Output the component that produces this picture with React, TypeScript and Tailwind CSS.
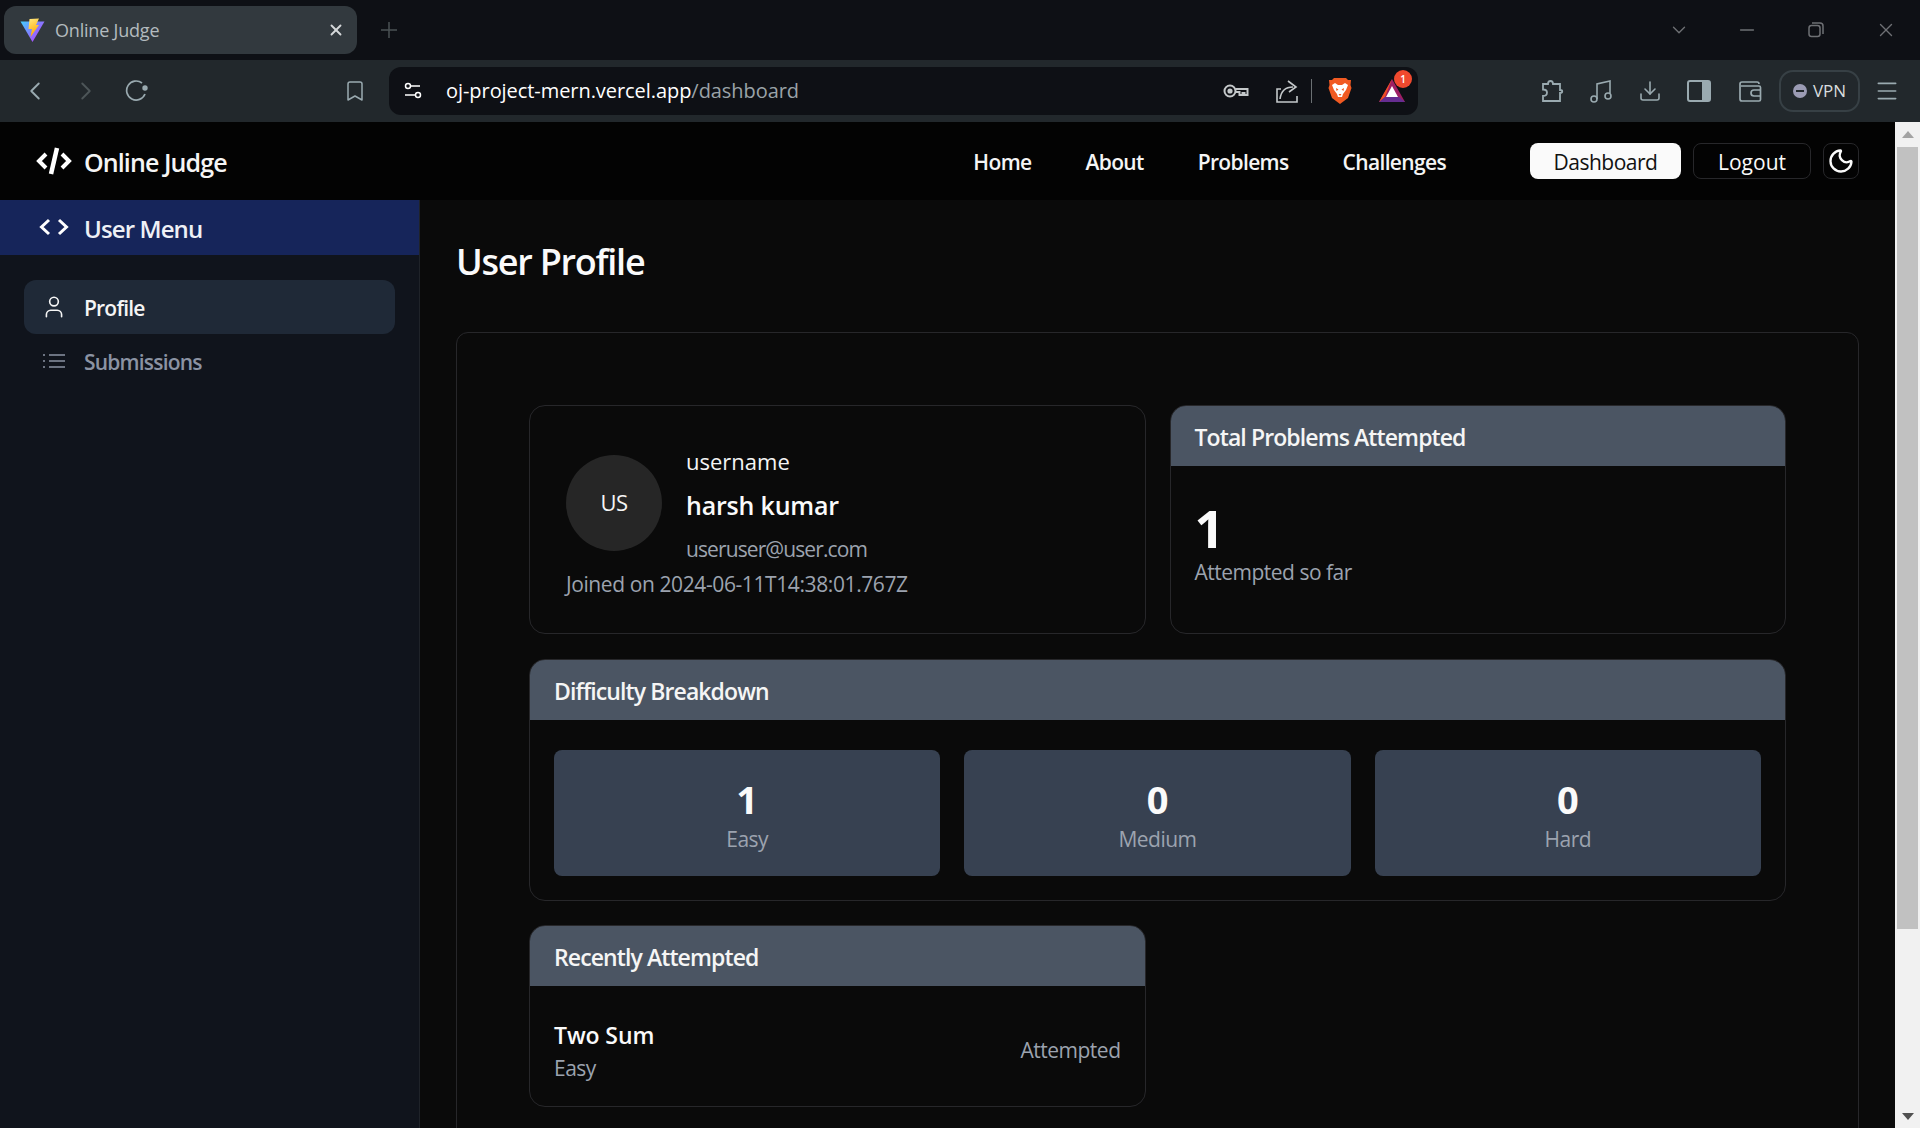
import { ChevronDown, ChevronLeft, ChevronRight, Bookmark, Download, Menu, Minus, Moon, User, X } from "lucide-react";

function ViteLogo() {
  return (
    <svg width="25" height="25" viewBox="0 0 25 25">
      <defs>
        <linearGradient id="viteA" x1="0" y1="0" x2="1" y2="0.8">
          <stop offset="0" stopColor="#41d1ff" />
          <stop offset="1" stopColor="#bd34fe" />
        </linearGradient>
        <linearGradient id="viteB" x1="0" y1="0" x2="0.3" y2="1">
          <stop offset="0" stopColor="#ffea83" />
          <stop offset="1" stopColor="#ffa800" />
        </linearGradient>
      </defs>
      <path d="M0.5 3.5 L24.5 3.5 L12.5 24 Z" fill="url(#viteA)" />
      <path d="M9.5 1 L19 0.5 L16 7 L19 7 L10.5 19 L12 11 L8.5 11 Z" fill="url(#viteB)" />
    </svg>
  );
}

function BraveLion() {
  return (
    <svg width="24" height="28" viewBox="0 0 24 28">
      <path d="M6 1 L18 1 L20 3 L23 3 L22.5 8 L23.5 11 L20 21 L12 27 L4 21 L0.5 11 L1.5 8 L1 3 L4 3 Z" fill="#f15a22" />
      <path d="M7 6 L10 8 L14 8 L17 6 L20 8 L18 13 L15 17 L14 20 L10 20 L9 17 L6 13 L4 8 Z" fill="#fff" />
      <path d="M8 11 L10.5 12.5 L8.5 14 Z M16 11 L13.5 12.5 L15.5 14 Z M10.5 17 L13.5 17 L12 19 Z" fill="#f15a22" />
    </svg>
  );
}

function BatLogo() {
  return (
    <svg width="28" height="24" viewBox="0 0 28 24">
      <path d="M14 0 L27 23 L1 23 Z" fill="#9e1f63" />
      <path d="M14 0 L1 23 L7 18 Z" fill="#f04e23" />
      <path d="M1 23 L27 23 L21 18 L7 18 Z" fill="#662d91" />
      <path d="M14 7 L20 18 L8 18 Z" fill="#fff" />
    </svg>
  );
}

function Toolbar() {
  return (
    <div className="h-[122px] shrink-0 bg-[#0e1015]">
      <div className="h-[60px] flex items-center pl-1">
        <div className="w-[353px] h-[48px] rounded-[12px] bg-[#32393e] flex items-center pl-[16px] pr-[12px]">
          <ViteLogo />
          <span className="ml-[10px] text-[18px] tracking-[-0.2px] text-[#b4bbbf] flex-1">Online Judge</span>
          <X size={18} strokeWidth={2.5} className="text-[#d5d8da]" />
        </div>
        <svg width="18" height="18" viewBox="0 0 18 18" className="ml-[23px] text-[#4b5154]">
          <path d="M9 1v16M1 9h16" stroke="currentColor" strokeWidth="1.5" />
        </svg>
        <div className="ml-auto flex items-center text-[#6e7074]">
          <ChevronDown size={22} strokeWidth={1.5} />
          <Minus size={22} strokeWidth={1.5} className="ml-[46px]" />
          <svg width="16" height="16" viewBox="0 0 16 16" fill="none" stroke="currentColor" strokeWidth="1.5" className="ml-[50px]">
            <rect x="1" y="3.5" width="11" height="11" rx="2.5" />
            <path d="M4 1h8a3 3 0 0 1 3 3v8" />
          </svg>
          <X size={22} strokeWidth={1.5} className="ml-[51px] mr-[23px]" />
        </div>
      </div>
      <div className="h-[62px] bg-[#22282c] flex items-center text-[#9aaab0]">
        <ChevronLeft size={30} strokeWidth={1.5} className="ml-[20px]" />
        <ChevronRight size={30} strokeWidth={1.5} className="ml-[21px] text-[#4d5558]" />
        <svg width="24" height="24" viewBox="0 0 24 24" fill="none" stroke="currentColor" strokeWidth="1.7" className="ml-[24px]">
          <path d="M20 15 A 9.5 9.5 0 1 1 17 4" />
          <circle cx="20" cy="9" r="2.7" fill="currentColor" stroke="none" />
        </svg>
        <Bookmark size={24} strokeWidth={1.5} className="ml-[194px]" />
        <div className="ml-[22px] w-[1029px] h-[48px] rounded-[12px] bg-[#0e1015] flex items-center pl-[14px] pr-[10px]">
          <svg width="20" height="20" viewBox="0 0 20 20" fill="none" stroke="#ffffff" strokeWidth="1.5">
            <circle cx="5" cy="5" r="2.5" />
            <path d="M8 5h9M2 14h10" />
            <circle cx="15" cy="14" r="2.5" />
          </svg>
          <span className="ml-[23px] text-[20px] text-white tracking-[-0.06px] flex-1">
            oj-project-mern.vercel.app<span className="text-[#9aa3a8]">/dashboard</span>
          </span>
          <svg width="26" height="16" viewBox="0 0 26 16" fill="none" stroke="#c4c8ca" strokeWidth="2" className="mr-[26px]">
            <circle cx="7" cy="8" r="5.5" />
            <circle cx="7" cy="8" r="1.6" fill="#c4c8ca" />
            <path d="M12.5 6h12v6h-3v-2h-2v2h-3v-3h-4" />
          </svg>
          <svg width="24" height="24" viewBox="0 0 24 24" fill="none" stroke="#c4c8ca" strokeWidth="1.6">
            <path d="M6 10 L2 10 L2 23 L22 23 L22 17 M5 20 C6 12 10 8 18 8 M13 2 L21 8 L14 13" />
          </svg>
          <div className="w-[1.5px] h-[24px] bg-[#6b7073] ml-[12px] mr-[16px]" />
          <BraveLion />
          <div className="relative ml-[26px] mr-[2px]">
            <BatLogo />
            <span className="absolute -top-[9px] -right-[6px] w-[18px] h-[18px] rounded-full bg-[#f0492e] text-white text-[10px] font-semibold flex items-center justify-center">1</span>
          </div>
        </div>
        <svg width="26" height="26" viewBox="0 0 26 26" fill="none" stroke="currentColor" strokeWidth="1.8" className="ml-[120px]">
          <path d="M5 6 h5 c0-4 5-4 5 0 h7 v6 c3 0 3 3 0 3 v8 h-17 v-5 c3 0 4-2 4-3.500 c0-2-2-3-4-3 Z" />
        </svg>
        <svg width="24" height="26" viewBox="0 0 24 26" fill="none" stroke="currentColor" strokeWidth="1.6" className="ml-[25px]">
          <circle cx="5" cy="21" r="3" />
          <circle cx="19" cy="18" r="3" />
          <path d="M8 21 V6 L21 3 V15" />
        </svg>
        <Download size={24} strokeWidth={1.6} className="ml-[25px]" />
        <svg width="24" height="24" viewBox="0 0 24 24" className="ml-[25px]">
          <rect x="1" y="2" width="22" height="20" rx="2" fill="none" stroke="currentColor" strokeWidth="2" />
          <rect x="15" y="2" width="8" height="20" fill="currentColor" />
        </svg>
        <svg width="24" height="24" viewBox="0 0 24 24" fill="none" stroke="currentColor" strokeWidth="1.7" className="ml-[27px]">
          <path d="M2 5 a2 2 0 0 1 2-2 h15 a2 2 0 0 1 2 2 M3 7 h18 a1.500 1.500 0 0 1 1.500 1.500 v12 a1.500 1.500 0 0 1-1.500 1.500 h-17 a2 2 0 0 1-2-2 V5" />
          <path d="M22 11 h-6 a2.500 2.500 0 0 0 0 6 h6" />
        </svg>
        <div className="ml-[17px] w-[81px] h-[42px] rounded-[14px] border-2 border-[#374045] flex items-center justify-center gap-[6px]">
          <span className="w-[14px] h-[14px] rounded-full bg-[#9b9bb4] flex items-center justify-center">
            <span className="w-[8px] h-[2px] bg-[#22282c]" />
          </span>
          <span className="text-[17px] text-[#d8dcde]">VPN</span>
        </div>
        <Menu size={26} strokeWidth={1.5} className="ml-[14px]" />
      </div>
    </div>
  );
}

function Navbar() {
  return (
    <header className="h-[78px] shrink-0 bg-[#030303] flex items-center pl-[36px] pr-[36px]">
      <svg width="36" height="30" viewBox="0 0 36 30" fill="none" stroke="#ffffff" strokeWidth="4">
        <path d="M10 8 L3 15 L10 22 M26 8 L33 15 L26 22" />
        <path d="M21 2 L15 28" strokeWidth="4.500" />
      </svg>
      <span className="ml-[12px] pt-[3px] text-[25px] font-semibold text-[#f5f5f5] tracking-[-0.9px]">Online Judge</span>
      <nav className="ml-auto pt-[3px] flex items-center gap-[54px] text-[21px] font-semibold text-[#f5f5f5] tracking-[-0.65px]">
        <span>Home</span>
        <span>About</span>
        <span>Problems</span>
        <span>Challenges</span>
      </nav>
      <button className="ml-[84px] w-[151px] h-[36px] pt-[2px] rounded-[8px] bg-[#fafafa] text-[#111] text-[21px] leading-[34px] font-medium tracking-[-0.5px]">Dashboard</button>
      <button className="ml-[12px] w-[118px] h-[36px] pt-[1px] rounded-[8px] border border-[#27272a] text-[#fafafa] text-[21px] leading-[32px] font-medium">Logout</button>
      <button className="ml-[12px] w-[36px] h-[36px] rounded-[8px] border border-[#27272a] flex items-center justify-center">
        <Moon size={28} strokeWidth={2} className="text-[#fafafa]" />
      </button>
    </header>
  );
}

function Sidebar() {
  return (
    <aside className="w-[420px] shrink-0 bg-[#10141c] border-r border-[#1f2329]">
      <div className="h-[55px] bg-[#16255a] flex items-center pl-[39px]">
        <svg width="30" height="22" viewBox="0 0 30 22" fill="none" stroke="#ffffff" strokeWidth="3">
          <path d="M10 3 L2.500 10 L10 17 M20 3 L27.500 10 L20 17" />
        </svg>
        <span className="ml-[15px] pt-[2px] text-[24px] font-semibold text-[#eef0f5] tracking-[-0.9px]">User Menu</span>
      </div>
      <div className="px-[24px] pt-[25px] flex flex-col">
        <div className="h-[54px] rounded-[12px] bg-[#1f2937] flex items-center pl-[17px] text-[#f5f5f5]">
          <User size={26} strokeWidth={1.5} />
          <span className="ml-[17px] pt-[3px] text-[21px] font-semibold tracking-[-0.8px]">Profile</span>
        </div>
        <div className="h-[54px] flex items-center pl-[19px] text-[#8b93a3]">
          <svg width="22" height="14" viewBox="0 0 22 14" fill="none" stroke="currentColor" strokeWidth="1.5">
            <path d="M6 1h16M6 7h16M6 13h16M0 1h2M0 7h2M0 13h2" />
          </svg>
          <span className="ml-[19px] pt-[3px] text-[21px] font-semibold tracking-[-0.8px]">Submissions</span>
        </div>
      </div>
    </aside>
  );
}

function Card({ title, children, className }: { title: string; children: React.ReactNode; className?: string }) {
  return (
    <div className={`rounded-[16px] border border-[#27272a] overflow-hidden ${className ?? ""}`}>
      <div className="h-[60px] pt-[2px] bg-[#4b5563] flex items-center pl-[24px] text-[23px] font-semibold text-[#f5f5f5] tracking-[-0.9px]">
        {title}
      </div>
      {children}
    </div>
  );
}

const difficulty = [
  { count: 1, label: "Easy" },
  { count: 0, label: "Medium" },
  { count: 0, label: "Hard" },
];

export default function App() {
  return (
    <div className="h-[1128px] overflow-hidden flex flex-col bg-[#0a0a0a] font-['Open_Sans',sans-serif]">
      <Toolbar />
      <div className="flex flex-1 min-h-0">
        <div className="flex-1 min-w-0 flex flex-col">
          <Navbar />
          <div className="flex flex-1 min-h-0">
            <Sidebar />
            <main className="flex-1 min-w-0 px-[36px] pt-[37px]">
              <h1 className="text-[36px] leading-[50px] font-semibold text-[#fafafa] tracking-[-1.25px]">User Profile</h1>
              <div className="mt-[45px] rounded-[12px] border border-[#27272a] p-[72px]">
                <div className="grid grid-cols-2 gap-6">
                  <div className="h-[229px] rounded-[16px] border border-[#27272a] px-[36px] pt-[37px]">
                    <div className="flex items-center gap-6">
                      <div className="mb-[6px] w-[96px] h-[96px] rounded-full bg-[#262626] flex items-center justify-center text-[22px] text-[#f5f5f5] tracking-[-0.5px]">US</div>
                      <div className="flex flex-col">
                        <span className="text-[22px] leading-[36px] text-[#f5f5f5]">username</span>
                        <span className="text-[25px] leading-[52px] font-semibold text-[#fafafa] tracking-[-0.2px]">harsh kumar</span>
                        <span className="text-[21px] leading-[37px] text-[#9ca3af] tracking-[-0.9px]">useruser@user.com</span>
                      </div>
                    </div>
                    <p className="text-[21px] leading-[32px] text-[#9ca3af] tracking-[-0.4px]">Joined on 2024-06-11T14:38:01.767Z</p>
                  </div>
                  <Card title="Total Problems Attempted" className="h-[229px]">
                    <div className="px-[24px] pt-[33px]">
                      <p className="text-[52px] leading-[57px] font-bold text-[#fafafa]">1</p>
                      <p className="mt-[1px] text-[21px] leading-[30px] text-[#9ca3af] tracking-[-0.5px]">Attempted so far</p>
                    </div>
                  </Card>
                </div>
                <Card title="Difficulty Breakdown" className="mt-[25px]">
                  <div className="grid grid-cols-3 gap-6 px-[24px] pt-[30px] pb-[24px]">
                    {difficulty.map((d) => (
                      <div key={d.label} className="h-[126px] rounded-[8px] bg-[#374151] flex flex-col items-center justify-center">
                        <span className="text-[38px] leading-[50px] font-bold text-[#fafafa]">{d.count}</span>
                        <span className="mt-[1px] text-[21px] leading-[28px] text-[#9ca3af] tracking-[-0.5px]">{d.label}</span>
                      </div>
                    ))}
                  </div>
                </Card>
                <div className="grid grid-cols-2 gap-6 mt-[24px]">
                  <Card title="Recently Attempted" className="h-[182px]">
                    <div className="flex items-center justify-between px-[24px] pt-[31px]">
                      <div className="flex flex-col">
                        <span className="text-[23px] leading-[36px] font-semibold text-[#fafafa] tracking-[-0.1px]">Two Sum</span>
                        <span className="text-[21px] leading-[30px] text-[#9ca3af] tracking-[-0.5px]">Easy</span>
                      </div>
                      <span className="pt-[1px] text-[21px] text-[#9ca3af] tracking-[-0.5px]">Attempted</span>
                    </div>
                  </Card>
                </div>
              </div>
            </main>
          </div>
        </div>
        <div className="w-[25px] shrink-0 bg-[#f1f1f1] flex flex-col items-center">
          <div className="mt-[9px] w-0 h-0 border-x-[6px] border-x-transparent border-b-[7px] border-b-[#a3a3a3]" />
          <div className="mt-[9px] w-[21px] h-[782px] bg-[#c1c1c1]" />
          <div className="mt-auto mb-[8px] w-0 h-0 border-x-[6px] border-x-transparent border-t-[7px] border-t-[#505050]" />
        </div>
      </div>
    </div>
  );
}
